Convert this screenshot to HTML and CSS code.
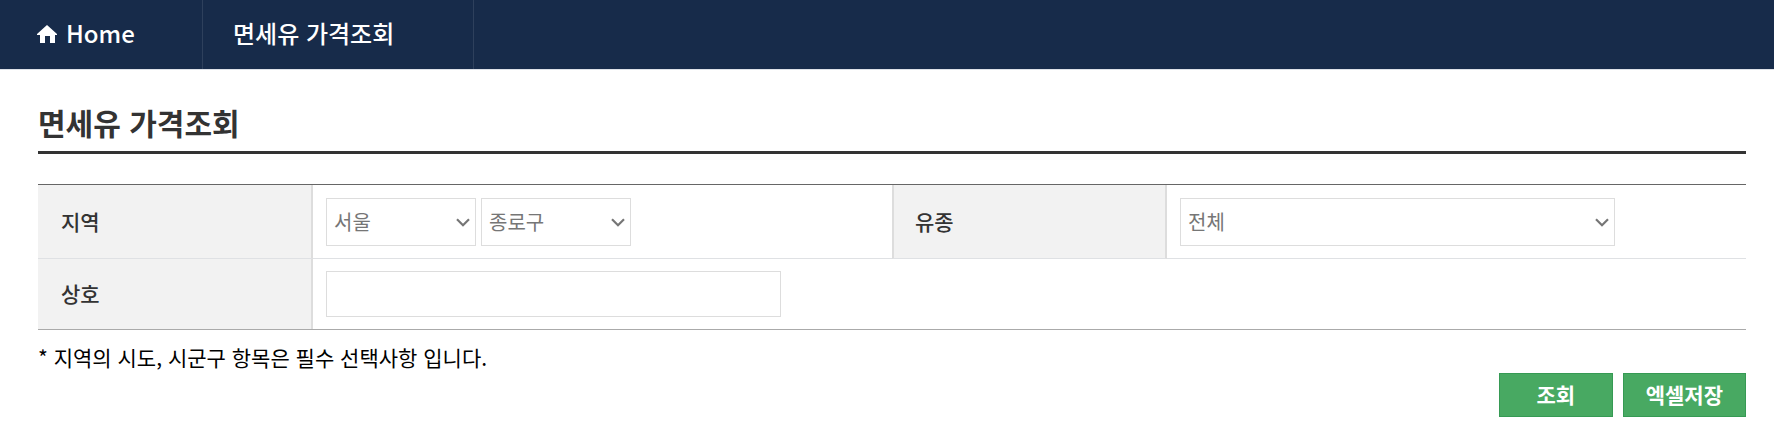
FILE: index.html
```html
<!DOCTYPE html>
<html lang="ko">
<head>
    <meta charset="UTF-8">
    <meta name="viewport" content="width=device-width, initial-scale=1.0">
    <title>면세유 가격조회</title>
    <link rel="stylesheet" href="styles.css">
</head>
<body>
    <header>
        <nav>
            <ul>
                <li class="home">
                    <a href="#">
                        <svg class="home-icon" viewBox="0 0 20 18" aria-hidden="true"><path d="M10 0 20 9v1h-2v8h-5v-7H8v7H3v-8H0V9z"/></svg>
                        Home
                    </a>
                </li>
                <li class="current"><a href="#">면세유 가격조회</a></li>
            </ul>
        </nav>
    </header>
    <main>
        <h1>면세유 가격조회</h1>
        <form>
            <table class="search-table">
                <colgroup>
                    <col class="col-label">
                    <col>
                    <col class="col-label">
                    <col>
                </colgroup>
                <tr>
                    <th scope="row"><label for="sido">지역</label></th>
                    <td>
                        <div class="fields">
                            <select id="sido" name="sido">
                                <option>서울</option>
                            </select>
                            <select id="sigungu" name="sigungu" aria-label="시군구">
                                <option>종로구</option>
                            </select>
                        </div>
                    </td>
                    <th scope="row" class="divided"><label for="oil">유종</label></th>
                    <td>
                        <div class="fields">
                            <select id="oil" class="wide" name="oil">
                                <option>전체</option>
                            </select>
                        </div>
                    </td>
                </tr>
                <tr>
                    <th scope="row"><label for="shop">상호</label></th>
                    <td colspan="3">
                        <div class="fields">
                            <input type="text" id="shop" name="shop">
                        </div>
                    </td>
                </tr>
            </table>
            <p class="note">* 지역의 시도, 시군구 항목은 필수 선택사항 입니다.</p>
            <div class="buttons">
                <button type="button">조회</button>
                <button type="button">엑셀저장</button>
            </div>
        </form>
    </main>
</body>
</html>
```
FILE: styles.css
```css
* {
    box-sizing: border-box;
}

body {
    margin: 0;
    background-color: #fff;
    color: #000;
    font-family: "Noto Sans CJK KR", "Noto Sans", sans-serif;
    font-size: 21px;
    line-height: 30px;
}

header {
    background-color: #172b4a;
    border-bottom: 1px solid #dde1e8;
}

nav ul {
    display: flex;
    list-style-type: none;
    margin: 0;
    padding: 0;
}

nav li {
    border-right: 1px solid #2e405c;
}

nav a {
    display: flex;
    align-items: center;
    height: 69px;
    padding: 0 30px 3px;
    color: #fff;
    font-size: 24px;
    font-weight: 500;
    text-decoration: none;
}

.home a {
    gap: 9px;
    min-width: 202px;
    padding-left: 37px;
}

.current a {
    min-width: 270px;
}

.home-icon {
    width: 20px;
    height: 18px;
    margin-top: 2px;
    fill: #fff;
}

main {
    padding: 30px 28px 20px 38px;
}

h1 {
    margin: 0 0 30px;
    padding-bottom: 7px;
    border-bottom: 3px solid #333;
    color: #333;
    font-size: 30px;
    font-weight: 700;
    line-height: 44px;
}

.search-table {
    width: 100%;
    table-layout: fixed;
    border-spacing: 0;
    border-top: 1px solid #666;
    border-bottom: 1px solid #aaa;
}

.col-label {
    width: 275px;
}

th {
    padding: 0 23px 2px;
    border-right: 2px solid #ddd;
    background-color: #f2f2f2;
    color: #333;
    font-weight: 500;
    text-align: left;
}

th.divided {
    border-left: 2px solid #ddd;
    padding-left: 21px;
}

td {
    padding: 12px 13px;
}

tr:first-child th,
tr:first-child td {
    border-bottom: 1px solid #dfe1e4;
}

tr:first-child td {
    padding-top: 13px;
}

.fields {
    display: flex;
    gap: 5px;
}

select,
input {
    height: 48px;
    padding: 0 7px 2px;
    border: 1px solid #ddd;
    border-radius: 0;
    background-color: #fff;
    color: #767676;
    font-family: inherit;
    font-size: 20px;
}

select {
    width: 150px;
    appearance: none;
    background-image: url("data:image/svg+xml,%3Csvg xmlns='http://www.w3.org/2000/svg' width='14' height='9'%3E%3Cpath d='M1 1.2l6 6 6-6' fill='none' stroke='%23767676' stroke-width='2.2'/%3E%3C/svg%3E");
    background-repeat: no-repeat;
    background-position: right 5px center;
}

select.wide {
    width: 435px;
}

input {
    width: 455px;
    height: 46px;
}

.note {
    margin: 12px 0 1px;
}

.buttons {
    display: flex;
    justify-content: flex-end;
    gap: 10px;
}

button {
    min-width: 114px;
    height: 44px;
    padding: 0 22px 2px;
    border: 1px solid #369a54;
    background-color: #48a962;
    color: #fff;
    font-family: inherit;
    font-size: 21px;
    font-weight: 700;
}
```
